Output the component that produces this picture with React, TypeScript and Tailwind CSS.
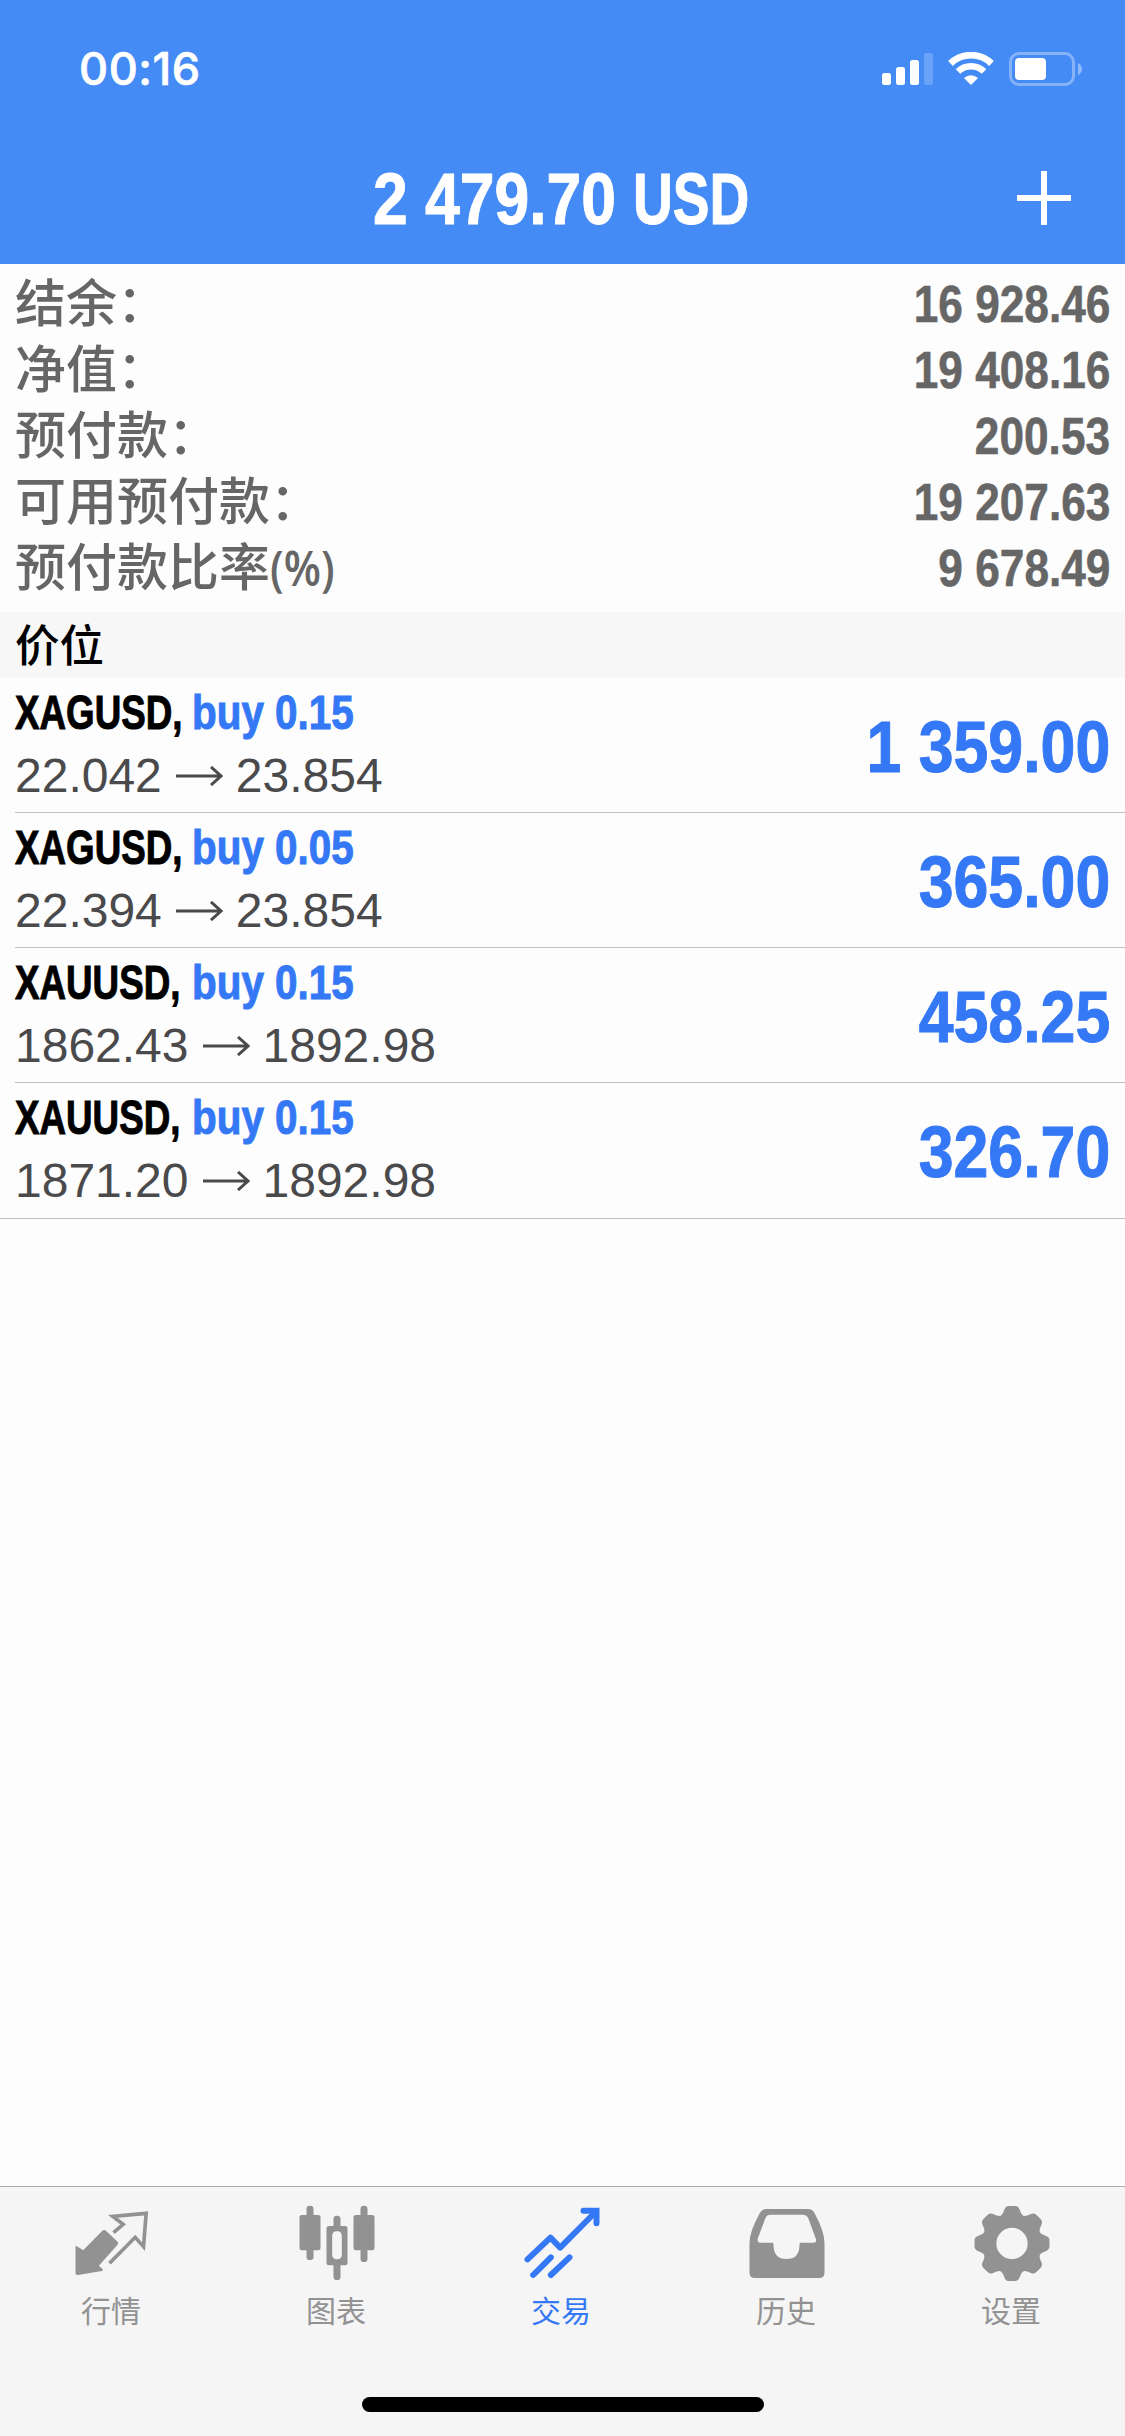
//-------------------------Imports-------------------------
import type { ReactNode } from "react";
import { clsx } from "clsx";

//-------------------------Types-------------------------
type SummaryItem = {
    label: string;
    unit?: string;
    value: string;
};

type Position = {
    symbol: string;
    side: string;
    open: string;
    current: string;
    profit: string;
};

type Tab = {
    label: string;
    icon: ReactNode;
    active?: boolean;
};

//-------------------------Data-------------------------
const summary: SummaryItem[] = [
    { label: '结余：', value: '16 928.46' },
    { label: '净值：', value: '19 408.16' },
    { label: '预付款：', value: '200.53' },
    { label: '可用预付款：', value: '19 207.63' },
    { label: '预付款比率', unit: '(%)', value: '9 678.49' },
];

const positions: Position[] = [
    { symbol: 'XAGUSD,', side: 'buy 0.15', open: '22.042', current: '23.854', profit: '1 359.00' },
    { symbol: 'XAGUSD,', side: 'buy 0.05', open: '22.394', current: '23.854', profit: '365.00' },
    { symbol: 'XAUUSD,', side: 'buy 0.15', open: '1862.43', current: '1892.98', profit: '458.25' },
    { symbol: 'XAUUSD,', side: 'buy 0.15', open: '1871.20', current: '1892.98', profit: '326.70' },
];

const gearAngles = [0, 45, 90, 135, 180, 225, 270, 315];

//-------------------------Icons-------------------------
const QuotesIcon = () => (
    <svg className="size-[84px]" viewBox="91.5 90 252 252" fill="currentColor">
        <path d="M105 230Q105 226 109 229L128 241L184 184Q190 177 197 183L229 213Q236 219 230 226L175 287L186 297Q189 301 184 303L113 315Q105 316 105 309Z" />
        <path d="M219 188L248 163L217 139L317 130L309 230L284 202L207 280" fill="none" stroke="currentColor" strokeWidth="11" />
    </svg>
);

const ChartIcon = () => (
    <svg className="size-[84px]" viewBox="766.5 90 252 252" fill="currentColor">
        <rect x="798" y="107" width="21" height="163" rx="10" />
        <rect x="777" y="135" width="63" height="106" rx="7" />
        <rect x="960" y="107" width="21" height="169" rx="10" />
        <rect x="939" y="135" width="63" height="106" rx="7" />
        <rect x="879" y="137" width="21" height="193" rx="10" />
        <rect x="858" y="168" width="63" height="118" rx="7" />
        <rect x="875" y="184" width="29" height="84" rx="13" fill="#f5f5f5" />
    </svg>
);

const TradeIcon = () => (
    <svg className="size-[84px]" viewBox="121.5 90 252 252" fill="none" stroke="currentColor" strokeWidth="18" strokeLinecap="round">
        <path d="M141 268L210 203L239 233L345 126" strokeLinejoin="round" />
        <path d="M309 122H348V160" />
        <path d="M158 315L211 262M211 315L267 262" />
    </svg>
);

const HistoryIcon = () => (
    <svg className="size-[84px]" viewBox="796.5 90 252 252" fill="currentColor">
        <path
            fillRule="evenodd"
            d="M858 117H982Q996 117 1002 129Q1032 185 1032 219V308Q1032 324 1016 324H823Q807 324 807 308V219Q807 185 838 129Q845 117 858 117ZM870 134Q859 134 855 144L832 205Q829 218 840 218H876Q879 218 879 224Q879 267 918 267Q957 267 957 224Q957 218 961 218H998Q1010 218 1006 206L983 144Q978 134 967 134Z"
        />
    </svg>
);

const SettingsIcon = () => (
    <svg className="size-[84px]" viewBox="211.5 90 252 252" fill="currentColor">
        <circle cx="334.500" cy="220.500" r="67.500" fill="none" stroke="currentColor" strokeWidth="41" />
        {gearAngles.map((angle) => (
            <path
                key={angle}
                transform={`rotate(${angle} 334.5 220.500)`}
                d="M298 139Q307 134 312 118Q316 108 326 108H343Q353 108 357 118Q362 134 371 139L362 146H307Z"
            />
        ))}
    </svg>
);

const tabs: Tab[] = [
    { label: '行情', icon: <QuotesIcon /> },
    { label: '图表', icon: <ChartIcon /> },
    { label: '交易', icon: <TradeIcon />, active: true },
    { label: '历史', icon: <HistoryIcon /> },
    { label: '设置', icon: <SettingsIcon /> },
];

//-------------------------Components-------------------------
const StatusBar = () => (
    <div className="flex h-[132px] items-start justify-between pt-[52px] pr-[42px] pl-[79px]">
        <span className="font-['Inter','Noto_Sans_CJK_SC',sans-serif] text-[45px] leading-[34px] font-medium tracking-[0.6px] [-webkit-text-stroke:0.7px_currentColor]">
            00:16
        </span>
        <div className="flex items-start">
            <svg className="mr-[15px] h-[34px] w-[51px]" viewBox="0 0 51 34" fill="white">
                <rect x="0" y="21" width="9" height="12" rx="2.500" />
                <rect x="14" y="15" width="9" height="18" rx="2.500" />
                <rect x="28" y="8" width="9" height="25" rx="2.500" />
                <rect x="42" y="1" width="9" height="32" rx="2.500" opacity="0.2" />
            </svg>
            <svg className="mr-[15px] h-[34px] w-[46px]" viewBox="0 0 46 34" fill="none" stroke="white">
                <path d="M2.500 11.500A29.500 29.500 0 0 1 43.500 11.500" strokeWidth="6.800" />
                <path d="M10 19.500A18.500 18.500 0 0 1 36 19.500" strokeWidth="6.500" />
                <path d="M16 26Q23 20.500 30 26L23 33Z" fill="white" stroke="none" />
            </svg>
            <svg className="h-[34px] w-[74px]" viewBox="0 0 74 34" fill="none">
                <rect x="1.500" y="1.500" width="63" height="31" rx="8.500" stroke="white" strokeWidth="3" opacity="0.35" />
                <rect x="6" y="6" width="31" height="22" rx="4" fill="white" />
                <path d="M69 11Q73 13 73 17Q73 21 69 23Z" fill="white" opacity="0.4" />
            </svg>
        </div>
    </div>
);

const NavBar = () => (
    <div className="flex h-[132px] items-center pl-[373px]">
        <h1 className="flex w-[644px] pt-[2px] text-[73px] leading-[84px] font-bold whitespace-nowrap [-webkit-text-stroke:1px_currentColor]">
            <span className="w-[260px] origin-left scale-x-[0.855]">2 479.70</span>
            <span className="w-[120px] origin-left scale-x-[0.755]">USD</span>
        </h1>
        <svg className="size-[54px]" viewBox="0 0 54 54" stroke="white" strokeWidth="6">
            <path d="M27 0V54M0 27H54" />
        </svg>
    </div>
);

const SummaryRow = ({ label, unit, value }: SummaryItem) => (
    <div className="flex h-[66px] items-baseline justify-between leading-[66px] text-[#666666]">
        <div className="flex items-baseline font-['Noto_Sans_CJK_SC',sans-serif] text-[51px] font-medium">
            <span>{label}</span>
            {unit && (
                <span className="origin-left scale-x-[0.88] font-['Open_Sans',sans-serif] text-[49px] leading-[50px] font-semibold">{unit}</span>
            )}
        </div>
        <span className="origin-right scale-x-[0.85] text-[52px] font-bold [-webkit-text-stroke:0.6px_currentColor]">{value}</span>
    </div>
);

const PositionRow = ({ position, last }: { position: Position; last: boolean }) => (
    <div
        className={clsx(
            'flex items-center justify-between border-b border-[#c0c0c2] pr-[15px]',
            last ? 'h-[136px] pl-[15px]' : 'ml-[15px] h-[135px]'
        )}
    >
        <div className="flex flex-col gap-[4px] pb-[3px]">
            <div className="flex h-[60px] text-[49px] leading-[60px] font-bold whitespace-nowrap [-webkit-text-stroke:1px_currentColor]">
                <span className="w-[177px] origin-left scale-x-[0.75] text-black">{position.symbol}</span>
                <span className="origin-left scale-x-[0.825] text-[#3478f6]">{position.side}</span>
            </div>
            <div className="flex h-[60px] items-center text-[48px] leading-[60px] text-[#4a4a4c]">
                <span>{position.open}</span>
                <svg className="mr-[13px] ml-[14px] h-[20px] w-[47px]" viewBox="0 0 47 20" fill="none" stroke="currentColor" strokeWidth="3">
                    <path d="M0 10H45M35 1L45 10L35 19" />
                </svg>
                <span>{position.current}</span>
            </div>
        </div>
        <span className="origin-right scale-x-[0.87] pt-[3px] text-[72px] leading-[84px] font-bold text-[#3478f6] [-webkit-text-stroke:1px_currentColor]">
            {position.profit}
        </span>
    </div>
);

const TabBar = () => (
    <nav className="flex h-[250px] flex-col items-center border-t border-[#aeaeae] bg-[#f5f5f5]">
        <div className="flex w-full pt-[13px]">
            {tabs.map((tab) => (
                <div
                    key={tab.label}
                    className={clsx('flex w-[225px] flex-col items-center', tab.active ? 'text-[#3478f6]' : 'text-[#929292]')}
                >
                    {tab.icon}
                    <span className="pr-[3px] pt-[5px] font-['Noto_Sans_CJK_SC',sans-serif] text-[30px] leading-[40px]">{tab.label}</span>
                </div>
            ))}
        </div>
        <div className="mt-[68px] h-[15px] w-[402px] rounded-full bg-black" />
    </nav>
);

//-------------------------Page-------------------------
export default function App() {
    return (
        <div className="flex h-[2436px] w-[1125px] flex-col overflow-hidden bg-[#fdfdfd] font-['Liberation_Sans','Noto_Sans_CJK_SC',sans-serif]">
            <header className="h-[264px] bg-[#458bf5] text-white">
                <StatusBar />
                <NavBar />
            </header>
            <main className="flex-1">
                <section className="px-[15px] pt-[3px] pb-[15px]">
                    {summary.map((item) => (
                        <SummaryRow key={item.label} {...item} />
                    ))}
                </section>
                <h2 className="h-[66px] bg-[#f7f7f7] pl-[15px] font-['Noto_Sans_CJK_SC',sans-serif] text-[44.5px] leading-[62px] font-medium text-black">
                    价位
                </h2>
                {positions.map((position, index) => (
                    <PositionRow key={index} position={position} last={index === positions.length - 1} />
                ))}
            </main>
            <TabBar />
        </div>
    );
}
